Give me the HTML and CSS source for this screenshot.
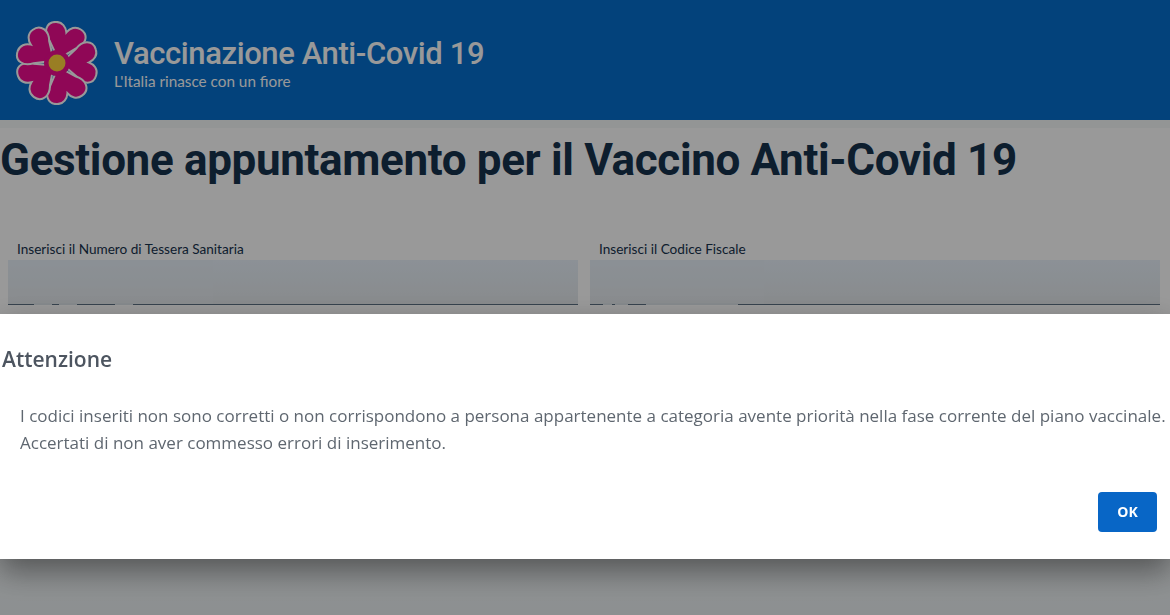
FILE: index.html
```html
<!DOCTYPE html>
<html lang="it">
<head>
<meta charset="utf-8">
<title>Vaccinazione Anti-Covid 19</title>
<link rel="stylesheet" href="styles.css">
</head>
<body>
<div class="page">
  <header class="site-header">
    <svg class="flower" viewBox="-42 -42 84 84" width="84" height="84" aria-hidden="true">
      <defs>
        <path id="petal" d="M0 -4 L-13.5 -19 C-22 -25 -23 -36 -13 -39 C-7 -41 -2 -37 0 -32 C2 -37 7 -41 13 -39 C23 -36 22 -25 13.5 -19 Z"/>
      </defs>
      <g class="petals">
        <use href="#petal" transform="rotate(17)"/>
        <use href="#petal" transform="rotate(89)"/>
        <use href="#petal" transform="rotate(161)"/>
        <use href="#petal" transform="rotate(233)"/>
        <use href="#petal" transform="rotate(305)"/>
      </g>
      <circle class="eye" r="13"/>
      <circle class="core" r="8.5"/>
    </svg>
    <div class="brand">
      <div class="brand-title">Vaccinazione Anti-Covid 19</div>
      <div class="brand-sub">L'Italia rinasce con un fiore</div>
    </div>
  </header>
  <main class="content">
    <h1 class="page-title">Gestione appuntamento per il Vaccino Anti-Covid 19</h1>
    <form class="form-grid">
      <div class="field">
        <label class="field-label">Inserisci il Numero di Tessera Sanitaria</label>
        <div class="field-input">
          <span class="redact redact-a"></span>
          <span class="gap gap-a1"></span><span class="gap gap-a2"></span><span class="gap gap-a3"></span>
        </div>
      </div>
      <div class="field">
        <label class="field-label">Inserisci il Codice Fiscale</label>
        <div class="field-input">
          <span class="redact redact-c"></span>
          <span class="gap gap-c1"></span><span class="gap gap-c2"></span><span class="gap gap-c3"></span>
        </div>
      </div>
    </form>
  </main>
</div>
<div class="overlay">
  <section class="modal" role="dialog">
    <h2 class="modal-title">Attenzione</h2>
    <div class="modal-body">
      <p>I codici inseriti non sono corretti o non corrispondono a persona appartenente a categoria avente priorità nella fase corrente del piano vaccinale.</p>
      <p>Accertati di non aver commesso errori di inserimento.</p>
    </div>
    <div class="modal-footer"><button class="ok-btn" type="button">OK</button></div>
  </section>
</div>
</body>
</html>
```
FILE: styles.css
```css
* { box-sizing: border-box; }
html, body { margin: 0; height: 100%; overflow: hidden; }
body { font-family: "Open Sans", "Liberation Sans", sans-serif; background: #fff; }
.page { height: 615px; display: flex; flex-direction: column; }
.site-header {
  height: 120px; background: #056ecd; display: flex; align-items: center;
  padding: 0 0 0 15px; gap: 15px; flex: none;
}
.flower { flex: none; margin-top: 5px; }
.petals { fill: #ee0c90; stroke: #fff; stroke-width: 2; }
.eye { fill: #ee0c90; }
.core { fill: #ffd23c; }
.brand { color: #fff; margin-top: 8px; }
.brand-title { font: 500 31px/34px "Roboto", sans-serif; letter-spacing: -0.4px; }
.brand-sub { font: 400 15.3px/20px "Lato", sans-serif; }
.content { flex: 1; background: linear-gradient(#f6f8f9 0, #f6f8f9 8px, #fff 8px, #fff 190px, #ebf0f2 100%); }
.page-title {
  margin: 0; padding-top: 12px; font: 700 44px/56px "Roboto", sans-serif;
  color: #17324d; letter-spacing: -0.35px; white-space: nowrap;
}
.form-grid { display: grid; grid-template-columns: 570px 570px; gap: 12px; padding: 0 8px; margin-top: 48px; }
.field-label { display: block; padding: 2px 0 0 9px; font: 400 13.6px/22px "Lato", sans-serif; color: #17324d; }
.field-input {
  position: relative; height: 45px; background: linear-gradient(#e9f2fb, #e4e8eb);
  border-bottom: 1px solid #5c6f82;
}
.redact { position: absolute; left: 0; top: 0; height: 44px; background: #e8eef5; opacity: .3; }
.redact-a { width: 205px; }
.redact-c { width: 174px; }
.gap { position: absolute; top: 43px; height: 2px; background: #dfe5ea; }
.gap-a1 { left: 26px; width: 18px; }
.gap-a2 { left: 51px; width: 18px; }
.gap-a3 { left: 107px; width: 18px; }
.gap-c1 { left: 13px; width: 9px; }
.gap-c2 { left: 25px; width: 13px; }
.gap-c3 { left: 56px; width: 92px; }
.overlay { position: fixed; inset: 0; background: rgba(0,0,0,.4); padding-top: 314px; }
.modal {
  height: 245px; background: #fff; padding: 30px 3px 0 2px; color: #5f6770;
  box-shadow: 0 12px 28px rgba(0,0,0,.42); position: relative;
}
.modal-title { margin: 0; font: 600 21px/30px "Open Sans", sans-serif; color: #4d5560; }
.modal-body { padding: 28px 0 0 18px; font-size: 17px; line-height: 27px; white-space: nowrap; }
.modal-body p { margin: 0; }
.modal-footer { position: absolute; right: 13px; bottom: 27px; }
.ok-btn {
  width: 59px; height: 40px; border: 0; border-radius: 4px; background: #0866c6; color: #fff;
  font: 700 14px/40px "Open Sans", sans-serif; padding: 0;
}
```
